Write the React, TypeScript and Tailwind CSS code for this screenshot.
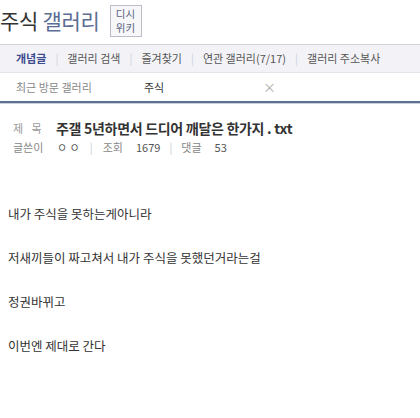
import React from "react";

const font = { fontFamily: '"Noto Sans CJK KR", "Noto Sans", sans-serif' };

export default function App() {
  const nav = ["갤러리 검색", "즐겨찾기", "연관 갤러리(7/17)", "갤러리 주소복사"];
  return (
    <div className="w-[420px] h-[418px] bg-white overflow-hidden" style={font}>
      {/* header */}
      <div className="flex items-start h-[44px]">
        <div className="mt-[6px] text-[21px] leading-[28px] tracking-[-0.3px] whitespace-nowrap shrink-0">
          <span className="text-[#333]">주식</span>{" "}
          <span className="text-[#5b6d95]">갤러리</span>
        </div>
        <div className="ml-[10px] mt-[5px] shrink-0 w-[32px] h-[32px] border border-[#b9bec8] bg-[#f7f7f9] flex flex-col items-center justify-center text-[10.5px] leading-[14px] text-[#5a6480] whitespace-nowrap">
          <span className="block leading-[14px]">디시</span>
          <span className="block leading-[14px]">위키</span>
        </div>
      </div>
      {/* nav */}
      <div className="h-[29px] border-t border-[#cfd3db] bg-[#f3f3f7] flex items-center pl-[16px] text-[11px] text-[#555] border-b border-b-[#e3e5ea]">
        <span className="font-bold text-[#3d4b8f]">개념글</span>
        {nav.map((n) => (
          <React.Fragment key={n}>
            <span className="mx-[9px] text-[#cfd2d9]">|</span>
            <span>{n}</span>
          </React.Fragment>
        ))}
      </div>
      {/* recent */}
      <div className="h-[28px] flex items-center text-[11px] text-[#888]">
        <span className="pl-[16px] w-[144px]">최근 방문 갤러리</span>
        <span className="text-[#333] w-[119px]">주식</span>
        <span className="text-[#aaa] text-[13px]">×</span>
      </div>
      <div className="h-[2px] bg-[#5d6f93]" />
      <div className="h-[1px] bg-[#c9d0dc]" />
      {/* title */}
      <div className="flex items-center mt-[14px] h-[20px]">
        <span className="pl-[13px] w-[56px] text-[11px] text-[#999] tracking-[3px] shrink-0">제 목</span>
        <span className="text-[14px] font-bold text-[#333] tracking-[-0.3px] whitespace-nowrap">
          주갤 5년하면서 드디어 깨달은 한가지 . txt
        </span>
      </div>
      <div className="flex items-center h-[18px] text-[11px] text-[#888]">
        <span className="pl-[13px] w-[57px]">글쓴이</span>
        <span className="text-[#555]">ㅇ ㅇ</span>
        <span className="mx-[10px] text-[#ccc]">|</span>
        <span>조회</span>
        <span className="ml-[13px] text-[#555]">1679</span>
        <span className="mx-[9px] text-[#ccc]">|</span>
        <span>댓글</span>
        <span className="ml-[13px] text-[#555]">53</span>
      </div>
      {/* body */}
      <div className="pl-[8px] mt-[49px] flex flex-col gap-[26px] text-[12.5px] leading-[18px] text-[#333]">
        <p>내가 주식을 못하는게아니라</p>
        <p>저새끼들이 짜고쳐서 내가 주식을 못했던거라는걸</p>
        <p>정권바뀌고</p>
        <p>이번엔 제대로 간다</p>
      </div>
    </div>
  );
}
